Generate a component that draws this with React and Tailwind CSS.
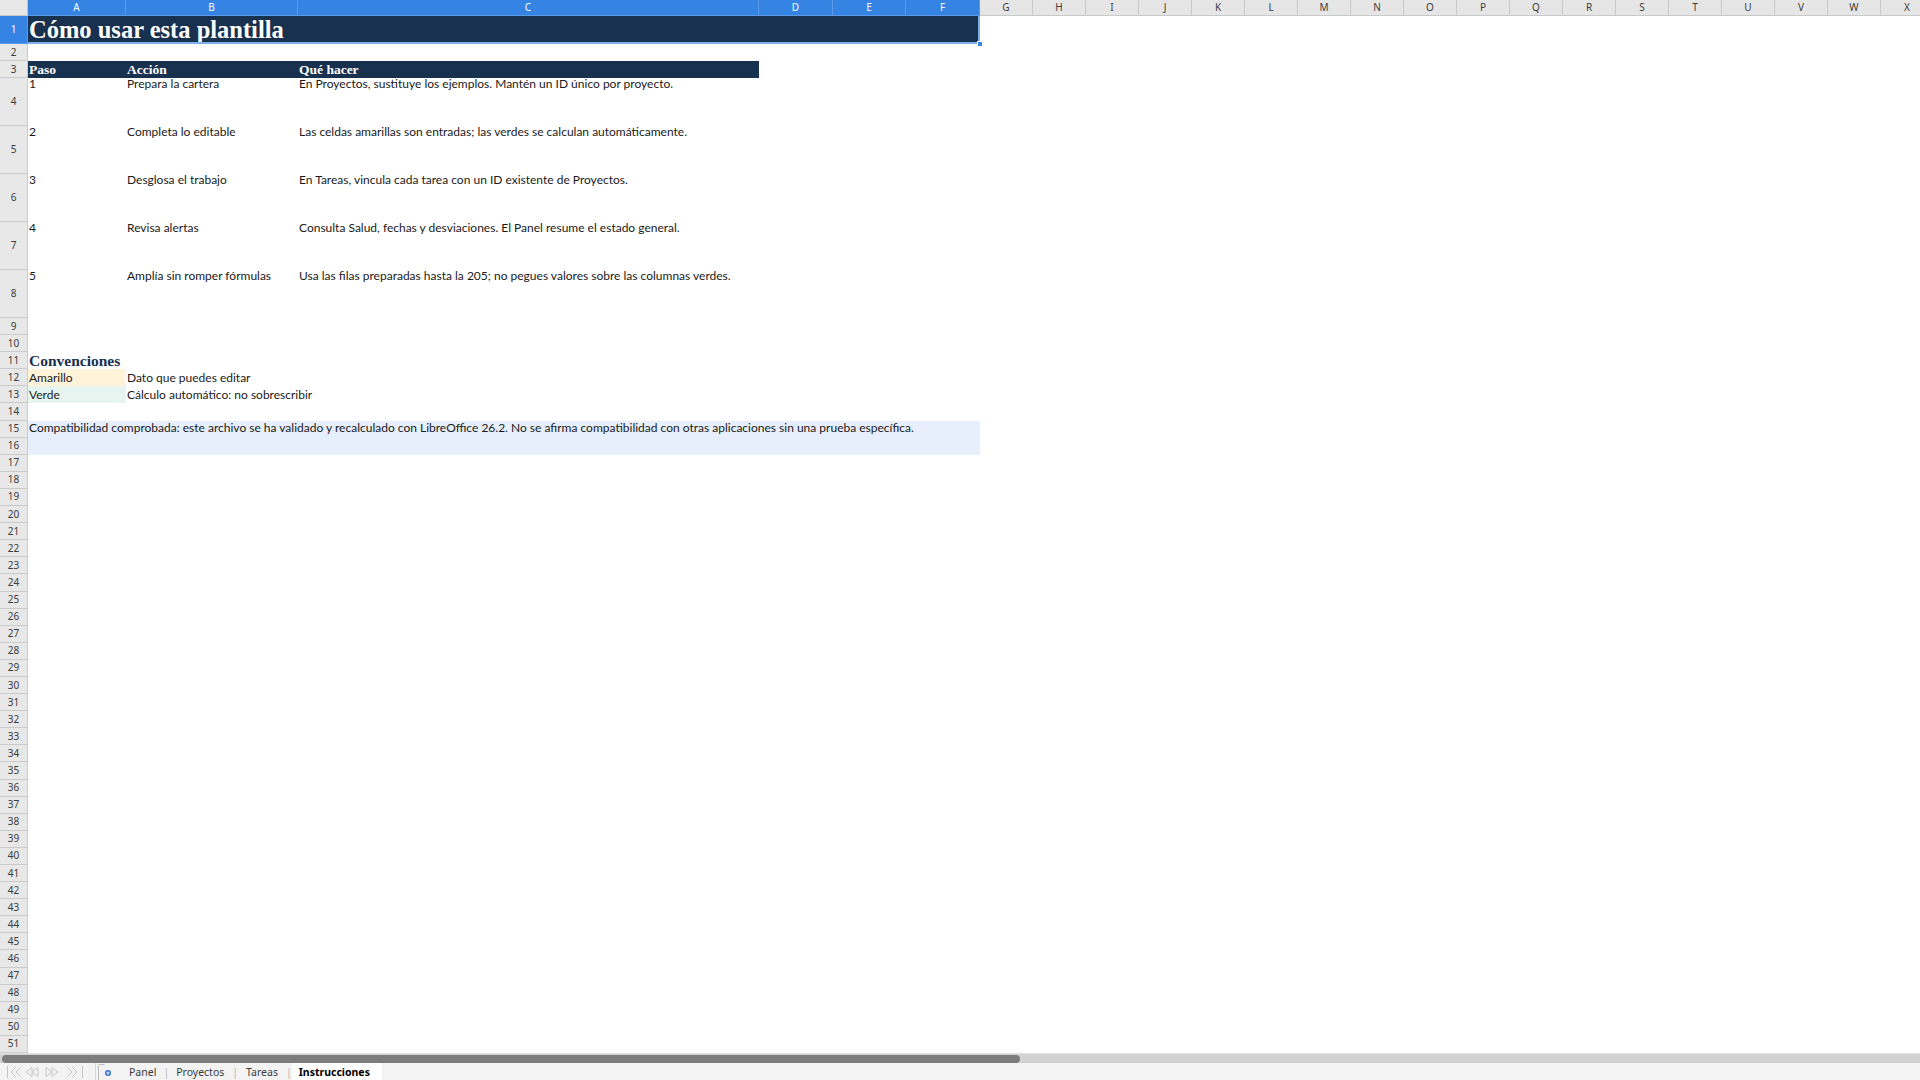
import React from 'react'

// ─── Sheet data ──────────────────────────────────────────────────────────────
const COLS = [
  { id: 'A', w: 'w-[98px]', sel: true },
  { id: 'B', w: 'w-[172px]', sel: true },
  { id: 'C', w: 'w-[461px]', sel: true },
  { id: 'D', w: 'w-[74px]', sel: true },
  { id: 'E', w: 'w-[73px]', sel: true },
  { id: 'F', w: 'w-[74px]', sel: true },
  ...'GHIJKLMNOPQRSTUVWX'.split('').map((id) => ({ id, w: 'w-[53px]', sel: false })),
]

const STEPS = [
  ['1', 'Prepara la cartera', 'En Proyectos, sustituye los ejemplos. Mantén un ID único por proyecto.'],
  ['2', 'Completa lo editable', 'Las celdas amarillas son entradas; las verdes se calculan automáticamente.'],
  ['3', 'Desglosa el trabajo', 'En Tareas, vincula cada tarea con un ID existente de Proyectos.'],
  ['4', 'Revisa alertas', 'Consulta Salud, fechas y desviaciones. El Panel resume el estado general.'],
  ['5', 'Amplía sin romper fórmulas', 'Usa las filas preparadas hasta la 205; no pegues valores sobre las columnas verdes.'],
]

const SERIF = "font-['Liberation_Serif',serif]"
const BODY = "font-['Lato',sans-serif] text-[12px] text-[#1a1a1a]"
const UI = "font-['Noto_Sans',sans-serif]"

function rowHeight(n) {
  if (n === 1) return 'h-[28px]'
  if (n >= 4 && n <= 8) return 'h-[48px]'
  if (n <= 3) return 'h-[17px]'
  return 'h-[17.1px]'
}

// ─── Cells ───────────────────────────────────────────────────────────────────
function Text({ w, className = '', children }) {
  return (
    <div className={`${w} shrink-0 pl-[1px] whitespace-nowrap overflow-visible ${className}`}>
      {children}
    </div>
  )
}

function RowContent({ n }) {
  if (n === 1) {
    return (
      <div className="relative w-[952px] h-full bg-[#18314f]">
        <div className={`${SERIF} pl-[1px] text-[24.5px] leading-[28px] font-bold text-white whitespace-nowrap`}>
          Cómo usar esta plantilla
        </div>
        <div className="absolute right-0 top-0 bottom-0 w-[2px] bg-[#7fb0ee]" />
        <div className="absolute left-0 right-0 bottom-0 h-[2px] bg-[#7fb0ee]" />
        <div className="absolute right-[-3px] bottom-[-3px] w-[6px] h-[6px] bg-[#3584e4] border border-white" />
      </div>
    )
  }
  if (n === 3) {
    return (
      <div className={`flex w-[731px] h-full bg-[#18314f] ${SERIF} text-[13.5px] leading-[17px] font-bold text-white`}>
        <Text w="w-[98px]">Paso</Text>
        <Text w="w-[172px]">Acción</Text>
        <Text w="w-[461px]">Qué hacer</Text>
      </div>
    )
  }
  if (n >= 4 && n <= 8) {
    const [a, b, c] = STEPS[n - 4]
    return (
      <div className={`flex h-full ${BODY} leading-[12px]`}>
        <Text w="w-[98px]">{a}</Text>
        <Text w="w-[172px]">{b}</Text>
        <Text w="w-[461px]">{c}</Text>
      </div>
    )
  }
  if (n === 11) {
    return (
      <div className={`flex items-end h-full ${SERIF} text-[15.5px] leading-[17px] font-bold text-[#18314f]`}>
        <Text w="w-[98px]">Convenciones</Text>
      </div>
    )
  }
  if (n === 12 || n === 13) {
    return (
      <div className={`flex h-full ${BODY} leading-[17px]`}>
        <Text w="w-[98px]" className={n === 12 ? 'bg-[#fff3da]' : 'bg-[#e6f5ef]'}>
          {n === 12 ? 'Amarillo' : 'Verde'}
        </Text>
        <Text w="w-[172px]">{n === 12 ? 'Dato que puedes editar' : 'Cálculo automático: no sobrescribir'}</Text>
      </div>
    )
  }
  if (n === 15 || n === 16) {
    return (
      <div className={`w-[952px] h-full bg-[#e6effb] ${BODY} leading-[13px] pl-[1px] whitespace-nowrap`}>
        {n === 15 &&
          'Compatibilidad comprobada: este archivo se ha validado y recalculado con LibreOffice 26.2. No se afirma compatibilidad con otras aplicaciones sin una prueba específica.'}
      </div>
    )
  }
  return null
}

function SheetRow({ n }) {
  const active = n === 1
  return (
    <div className={`flex shrink-0 ${rowHeight(n)}`}>
      <div
        className={`w-[28px] shrink-0 flex items-center justify-center border-b border-r ${UI} text-[10px] ${
          active ? 'bg-[#3584e4] text-white border-[#5a9ae8]' : 'bg-[#e8e8e8] text-[#3c3c3c] border-[#cbcbcb]'
        }`}
      >
        {n}
      </div>
      <div className="flex-1 min-w-0 h-full">
        <RowContent n={n} />
      </div>
    </div>
  )
}

function ColumnHeader() {
  return (
    <div className="flex h-4 shrink-0">
      <div className="w-[28px] shrink-0 bg-[#e8e8e8] border-r border-b border-[#c4c4c4]" />
      {COLS.map((c) => (
        <div
          key={c.id}
          className={`${c.w} shrink-0 flex items-center justify-center border-r border-b ${UI} text-[10px] ${
            c.sel ? 'bg-[#3584e4] text-white border-[#5b9ae6]' : 'bg-[#e6e6e6] text-[#3c3c3c] border-[#c9c9c9]'
          }`}
        >
          {c.id}
        </div>
      ))}
    </div>
  )
}

// ─── Bottom bars ─────────────────────────────────────────────────────────────
function NavArrows() {
  return (
    <svg width="78" height="14" viewBox="0 0 78 14" fill="none" stroke="#c6c6c6" strokeWidth="1">
      <path d="M1.5 1v12" />
      <path d="M10 2l-5 5 5 5M15 2l-5 5 5 5" />
      <path d="M26 2.5l-6 4.5 6 4.5z M32 2.5l-6 4.5 6 4.5z" />
      <path d="M40 2.5l6 4.5-6 4.5z M46 2.5l6 4.5-6 4.5z" />
      <path d="M61 2l5 5-5 5M66 2l5 5-5 5" />
      <path d="M76.5 1v12" />
    </svg>
  )
}

function AddSheetIcon() {
  return (
    <svg width="16" height="17" viewBox="0 0 16 17" fill="none">
      <path d="M1.5 17V2.5a1 1 0 0 1 1-1h5" stroke="#bdbdbd" />
      <circle cx="11" cy="10" r="3" fill="#2f6fd1" />
      <path d="M11 8.4v3.2M9.4 10h3.2" stroke="#ffffff" strokeWidth="1" />
    </svg>
  )
}

function Tabs() {
  return (
    <div className={`flex h-[17px] shrink-0 bg-[#f3f3f3] ${UI} text-[10.5px] leading-[14px] text-[#3a3a3a]`}>
      <div className="w-[86px] pl-[6px] flex items-end pb-[1px]">
        <NavArrows />
      </div>
      <div className="w-[10px] h-full border-r border-[#d8d8d8]" />
      <div className="w-[20px] pl-[1px] h-full flex items-end">
        <AddSheetIcon />
      </div>
      <div className="flex items-end h-full pl-[13px]">
        <span className="pb-[1px]">Panel</span>
        <span className="pb-[1px] px-[7px] text-[#b8b8b8]">|</span>
        <span className="pb-[1px]">Proyectos</span>
        <span className="pb-[1px] px-[8px] text-[#b8b8b8]">|</span>
        <span className="pb-[1px]">Tareas</span>
        <span className="pb-[1px] pl-[8px] text-[#b8b8b8]">|</span>
        <span className="h-full flex items-end pb-[1px] bg-white pl-[7px] pr-[12px] font-bold text-black">
          Instrucciones
        </span>
      </div>
    </div>
  )
}

export default function App() {
  const rows = Array.from({ length: 51 }, (_, i) => i + 1)
  return (
    <div className="w-[1920px] h-[1080px] flex flex-col overflow-hidden bg-white">
      <div className="flex-1 min-h-0 overflow-hidden flex flex-col">
        <ColumnHeader />
        {rows.map((n) => (
          <SheetRow key={n} n={n} />
        ))}
      </div>
      <div className="h-[10px] shrink-0 bg-[#d2d2d2] border-t border-[#e2e2e2] flex items-center px-[2px]">
        <div className="w-[1018px] h-[8px] rounded-full bg-[#7d7d7d]" />
      </div>
      <Tabs />
    </div>
  )
}
